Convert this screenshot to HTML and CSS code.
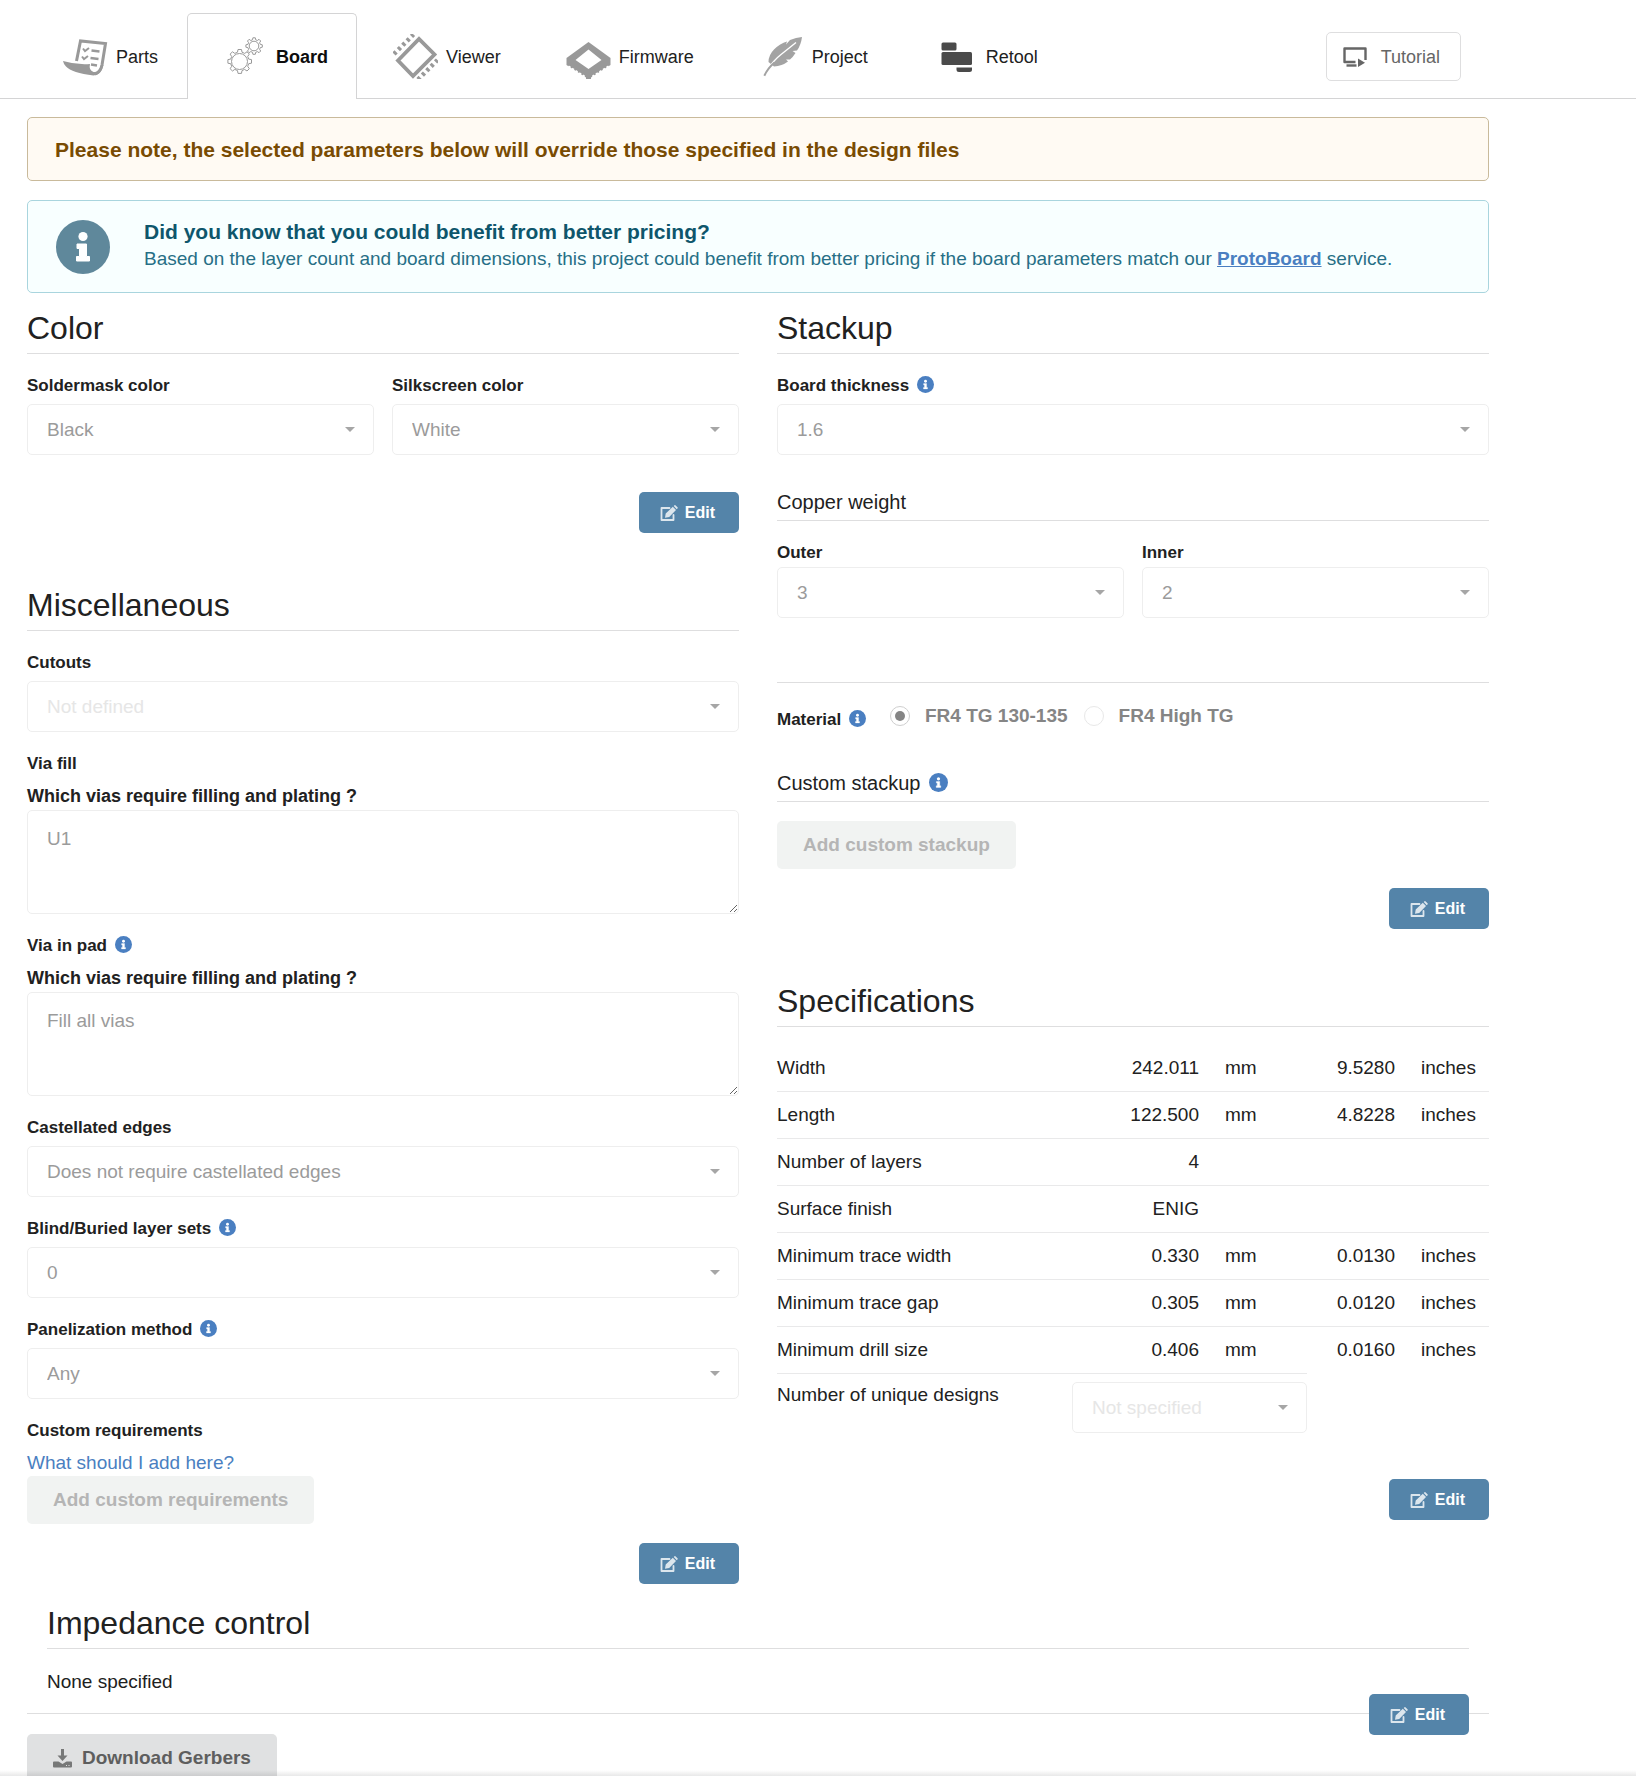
FILE: index.html
```html
<!DOCTYPE html>
<html lang="en">
<head>
    <meta charset="UTF-8">
    <meta name="viewport" content="width=device-width, initial-scale=1.0">
    <title>Board parameters</title>
    <link rel="stylesheet" href="styles.css">
</head>
<body>
    <!-- Shared icons -->
    <svg class="sprite" aria-hidden="true">
        <symbol id="icon-info" viewBox="0 0 54 54">
            <circle cx="27" cy="27" r="27" fill="currentColor"/>
            <circle cx="27" cy="16.500" r="4.600" fill="#fff"/>
            <path d="M21 24h9.500v12.500h3v4.500H20.500v-4.500h3v-8H21z" fill="#fff" stroke="#fff" stroke-width="1" stroke-linejoin="round"/>
        </symbol>
        <symbol id="icon-edit" viewBox="0 0 18 16">
            <path d="M9.500 3H1.500v12h12V10" fill="none" stroke="currentColor" stroke-width="1.800" stroke-linejoin="round" stroke-linecap="round"/>
            <path d="M12.800 1.800l3.200 3.200L9.200 11.900l-4.200.9.700-4.200zM13.700 1l.8-.8q.6-.4 1.200.2l1.800 1.800q.5.600 0 1.200l-.8.800z" fill="currentColor"/>
        </symbol>
    </svg>

    <header class="topbar">
        <nav class="tabs">
            <a class="tab" href="#parts">
                <svg class="tab-icon" viewBox="0 0 45 45">
                    <path d="M13.500 27L17.500 7 42.500 9.500 39 31Q37.500 38 32 40" fill="none" stroke="#999" stroke-width="3"/>
                    <path d="M0 27Q13 31 27 30Q25.500 36 30.500 38Q36 39 38 31L40.500 31Q38 41.500 30.500 41.500Q9 39 3 32.500Q.5 30 0 27z" fill="#999"/>
                    <path d="M20 14.500l2 2.500 4-3M19 22.500l2 2.500 4-3" fill="none" stroke="#999" stroke-width="2"/>
                    <path d="M28.500 16.500l8 1M27.500 24l8 1M28 30.500l6 1" stroke="#999" stroke-width="2.400"/>
                </svg>
                Parts
            </a>
            <a class="tab active" href="#board" aria-current="page">
                <svg class="tab-icon" viewBox="0 0 45 45">
                    <g fill="none" stroke="#999" stroke-width="1">
                        <circle cx="16.500" cy="27.500" r="8"/>
                        <path d="M14.500 18.200l.5-2.700h3.500l.5 2.700 2.700 1.200 2.300-1.600 2.300 2.300-1.600 2.400 1 2.600 2.800.5v3.600l-2.800.5-1 2.600 1.600 2.400-2.300 2.300-2.400-1.600-2.600 1.200-.5 2.800H15l-.5-2.800-2.700-1.200-2.300 1.600-2.400-2.300 1.600-2.400-1-2.600-2.800-.5v-3.600l2.800-.5 1-2.600-1.600-2.400 2.400-2.300 2.300 1.600z"/>
                        <circle cx="31" cy="12" r="4.800"/>
                        <path d="M29.500 5.800l.4-2h2.400l.4 2 1.700.7 1.600-1.200 1.700 1.700-1.100 1.700.7 1.700 2 .4v2.400l-2 .4-.7 1.700 1.100 1.700-1.700 1.700-1.600-1.100-1.700.7-.4 2h-2.400l-.4-2-1.700-.7-1.700 1.100-1.600-1.700 1.100-1.700-.7-1.700-2-.4v-2.400l2-.4.7-1.700L24.500 7l1.600-1.700 1.700 1.200z"/>
                    </g>
                </svg>
                Board
            </a>
            <a class="tab" href="#viewer">
                <svg class="tab-icon" viewBox="0 0 45 45">
                    <path d="M5 26.500L26 5 41.500 20.500 20 42z" fill="none" stroke="#999" stroke-width="3.800"/>
                    <path d="M1 20L20.500 .5M25 45.500L44.500 26" stroke="#999" stroke-width="4.500" stroke-dasharray="3 3.200"/>
                </svg>
                Viewer
            </a>
            <a class="tab" href="#firmware">
                <svg class="tab-icon" viewBox="0 0 45 45">
                    <path d="M22.500 8L44.500 24v7L25 43.500v1.500h-5v-1.500L.5 31v-7zM22.500 15.500L9.500 26 22.500 35l13-9z" fill="#999" fill-rule="evenodd"/>
                    <path d="M2 33L19.500 44M43 33L25.500 44" stroke="#fff" stroke-width="3.400" stroke-dasharray="2.400 1.800"/>
                </svg>
                Firmware
            </a>
            <a class="tab" href="#project">
                <svg class="tab-icon" viewBox="0 0 45 45">
                    <path d="M9.500 28Q9.500 21 15 15.500 21 9.500 28 7.500L27 10.500 31 6Q37 3.500 43 3 42 11 38 16.500l-4.500.500 3 2Q34 23 31 25.500l-4 0 2 2Q23 32 15 32.500z" fill="#a3a3a3"/>
                    <path d="M8.500 35.500Q15 26 22 20.500T37 8.500" fill="none" stroke="#fff" stroke-width="1.400"/>
                    <path d="M5.300 41.700Q9 34 15.500 28.500" fill="none" stroke="#a3a3a3" stroke-width="2"/>
                </svg>
                Project
            </a>
            <a class="tab" href="#retool">
                <svg class="tab-icon" viewBox="0 0 45 45">
                    <g fill="#4a4a4a">
                        <rect x="8.500" y="8.500" width="15" height="8" rx="1.500"/>
                        <rect x="8.500" y="18" width="30.500" height="13" rx="1.500"/>
                        <path d="M23.500 33.500H39v2q0 2.500-2.500 2.500H26q-2.500 0-2.500-2.500z"/>
                    </g>
                </svg>
                Retool
            </a>
        </nav>
        <button class="tutorial" type="button">
            <svg class="tutorial-icon" viewBox="0 0 24 20">
                <path d="M12.500 15H1.500V1.500h21V13" fill="none" stroke="#666" stroke-width="2.400" stroke-linejoin="round"/>
                <path d="M3.500 18.500h10" stroke="#666" stroke-width="2.400"/>
                <path d="M15 11.500l7 4.250-7 4.250z" fill="#666"/>
            </svg>
            Tutorial
        </button>
    </header>

    <main class="content">
        <div class="message warning">Please note, the selected parameters below will override those specified in the design files</div>

        <div class="message info">
            <svg class="message-icon"><use href="#icon-info"/></svg>
            <div>
                <div class="message-title">Did you know that you could benefit from better pricing?</div>
                <p>Based on the layer count and board dimensions, this project could benefit from better pricing if the board parameters match our <a href="#protoboard">ProtoBoard</a> service.</p>
            </div>
        </div>

        <div class="columns">
            <div class="column">
                <section>
                    <h2>Color</h2>
                    <div class="fields">
                        <div class="field">
                            <label for="soldermask">Soldermask color</label>
                            <div class="dropdown"><select id="soldermask" disabled><option>Black</option></select></div>
                        </div>
                        <div class="field">
                            <label for="silkscreen">Silkscreen color</label>
                            <div class="dropdown"><select id="silkscreen" disabled><option>White</option></select></div>
                        </div>
                    </div>
                    <div class="actions spaced">
                        <button class="edit" type="button"><svg><use href="#icon-edit"/></svg>Edit</button>
                    </div>
                </section>

                <section>
                    <h2>Miscellaneous</h2>
                    <div class="field">
                        <label for="cutouts">Cutouts</label>
                        <div class="dropdown empty"><select id="cutouts" disabled><option>Not defined</option></select></div>
                    </div>
                    <div class="field">
                        <div class="label">Via fill</div>
                        <label class="question" for="via-fill">Which vias require filling and plating ?</label>
                        <textarea id="via-fill" disabled>U1</textarea>
                    </div>
                    <div class="field">
                        <div class="label">Via in pad <svg class="hint"><use href="#icon-info"/></svg></div>
                        <label class="question" for="via-in-pad">Which vias require filling and plating ?</label>
                        <textarea id="via-in-pad" disabled>Fill all vias</textarea>
                    </div>
                    <div class="field">
                        <label for="castellated">Castellated edges</label>
                        <div class="dropdown"><select id="castellated" disabled><option>Does not require castellated edges</option></select></div>
                    </div>
                    <div class="field">
                        <label for="blind">Blind/Buried layer sets <svg class="hint"><use href="#icon-info"/></svg></label>
                        <div class="dropdown"><select id="blind" disabled><option>0</option></select></div>
                    </div>
                    <div class="field">
                        <label for="panelization">Panelization method <svg class="hint"><use href="#icon-info"/></svg></label>
                        <div class="dropdown"><select id="panelization" disabled><option>Any</option></select></div>
                    </div>
                    <div class="field">
                        <div class="label">Custom requirements</div>
                        <a class="help-link" href="#help">What should I add here?</a>
                        <button class="add" type="button" disabled>Add custom requirements</button>
                    </div>
                    <div class="actions">
                        <button class="edit" type="button"><svg><use href="#icon-edit"/></svg>Edit</button>
                    </div>
                </section>
            </div>

            <div class="column">
                <section>
                    <h2>Stackup</h2>
                    <div class="field">
                        <label for="thickness">Board thickness <svg class="hint"><use href="#icon-info"/></svg></label>
                        <div class="dropdown"><select id="thickness" disabled><option>1.6</option></select></div>
                    </div>
                    <h3>Copper weight</h3>
                    <div class="fields tight">
                        <div class="field">
                            <label for="outer">Outer</label>
                            <div class="dropdown"><select id="outer" disabled><option>3</option></select></div>
                        </div>
                        <div class="field">
                            <label for="inner">Inner</label>
                            <div class="dropdown"><select id="inner" disabled><option>2</option></select></div>
                        </div>
                    </div>
                    <div class="material" role="radiogroup" aria-labelledby="material-label">
                        <div class="label" id="material-label">Material <svg class="hint"><use href="#icon-info"/></svg></div>
                        <label class="radio"><input type="radio" name="material" checked disabled>FR4 TG 130-135</label>
                        <label class="radio"><input type="radio" name="material" disabled>FR4 High TG</label>
                    </div>
                    <h3>Custom stackup <svg class="hint"><use href="#icon-info"/></svg></h3>
                    <button class="add stackup" type="button" disabled>Add custom stackup</button>
                    <div class="actions">
                        <button class="edit" type="button"><svg><use href="#icon-edit"/></svg>Edit</button>
                    </div>
                </section>

                <section>
                    <h2>Specifications</h2>
                    <table class="specs">
                        <colgroup>
                            <col><col class="col-value"><col class="col-unit"><col class="col-inch"><col class="col-inches">
                        </colgroup>
                        <tbody>
                            <tr><td>Width</td><td>242.011</td><td>mm</td><td>9.5280</td><td>inches</td></tr>
                            <tr><td>Length</td><td>122.500</td><td>mm</td><td>4.8228</td><td>inches</td></tr>
                            <tr><td>Number of layers</td><td>4</td><td></td><td></td><td></td></tr>
                            <tr><td>Surface finish</td><td>ENIG</td><td></td><td></td><td></td></tr>
                            <tr><td>Minimum trace width</td><td>0.330</td><td>mm</td><td>0.0130</td><td>inches</td></tr>
                            <tr><td>Minimum trace gap</td><td>0.305</td><td>mm</td><td>0.0120</td><td>inches</td></tr>
                            <tr><td>Minimum drill size</td><td>0.406</td><td>mm</td><td>0.0160</td><td>inches</td></tr>
                            <tr class="designs">
                                <td><label for="designs">Number of unique designs</label></td>
                                <td colspan="2"><div class="dropdown empty"><select id="designs" disabled><option>Not specified</option></select></div></td>
                            </tr>
                        </tbody>
                    </table>
                    <div class="actions spaced-lg">
                        <button class="edit" type="button"><svg><use href="#icon-edit"/></svg>Edit</button>
                    </div>
                </section>
            </div>
        </div>

        <section class="impedance">
            <h2>Impedance control</h2>
            <p>None specified</p>
            <div class="actions">
                <button class="edit" type="button"><svg><use href="#icon-edit"/></svg>Edit</button>
            </div>
        </section>

        <div class="downloads">
            <button class="download" type="button">
                <svg viewBox="0 0 19 19">
                    <path d="M8 0h3v6.500h3.500l-5 5.500-5-5.500H8z" fill="currentColor"/>
                    <path d="M1 12.500h4.500L9.500 15l4-2.500H18q1 0 1 1v4q0 1-1 1H1q-1 0-1-1v-4q0-1 1-1z" fill="currentColor"/>
                    <path d="M13 16.500h1M15.500 16.500h1" stroke="#e0e1e2"/>
                </svg>
                Download Gerbers
            </button>
        </div>
    </main>

    <div class="bottom-shade"></div>
</body>
</html>
```

FILE: styles.css
```css
* {
    box-sizing: border-box;
}
body {
    margin: 0;
    height: 100vh;
    overflow: hidden;
    font-family: "Helvetica Neue", "Liberation Sans", Arial, sans-serif;
    font-size: 19px;
    line-height: 24px;
    color: #212121;
    background: #fff;
}
button, select, textarea {
    font-family: inherit;
    font-size: inherit;
    line-height: inherit;
}
h2, h3, p {
    margin: 0;
    font-weight: normal;
}
.sprite {
    display: none;
}

/* Top bar */
.topbar {
    display: flex;
    align-items: flex-end;
    padding: 13px 175px 0 27px;
    border-bottom: 1px solid #d4d4d5;
}
.tabs {
    display: flex;
    flex: 1;
}
.tab {
    display: flex;
    align-items: center;
    gap: 8px;
    height: 86px;
    margin-bottom: -1px;
    padding: 0 28px 0 35px;
    border: 1px solid transparent;
    border-bottom: none;
    font-size: 18px;
    color: #212121;
    text-decoration: none;
}
.tab.active {
    background: #fff;
    border-color: #d4d4d5;
    border-radius: 5px 5px 0 0;
    font-weight: bold;
    color: #0d0d0d;
}
.tab-icon {
    width: 45px;
    height: 45px;
}
.tutorial {
    display: flex;
    align-items: center;
    gap: 14px;
    height: 49px;
    margin-bottom: 17px;
    padding: 0 20px 0 16px;
    background: #fff;
    border: 1px solid #dededf;
    border-radius: 5px;
    font-size: 18px;
    color: #666;
}
.tutorial-icon {
    width: 24px;
    height: 20px;
}

/* Messages */
.content {
    padding: 18px 147px 0 27px;
}
.message {
    border: 1px solid;
    border-radius: 5px;
}
.warning {
    padding: 20px 27px 18px;
    background: #fffaf3;
    border-color: #c9ba9b;
    font-size: 21px;
    font-weight: bold;
    color: #794b02;
}
.info {
    display: flex;
    gap: 34px;
    margin-top: 19px;
    padding: 18px 28px 17px;
    background: #f8ffff;
    border-color: #a9d5de;
    color: #276f86;
}
.message-icon {
    flex: none;
    width: 54px;
    height: 54px;
    margin: 1px 0;
    color: #5f889b;
}
.message-title {
    font-size: 21px;
    line-height: 26px;
    font-weight: bold;
    color: #0e566c;
}
.info p {
    line-height: 28px;
}
.info a {
    font-weight: bold;
    color: #4a7fc1;
}

/* Sections */
.columns {
    display: grid;
    grid-template-columns: 1fr 1fr;
    gap: 38px;
    margin-top: 15px;
}
section + section {
    margin-top: 52px;
}
h2 {
    padding-bottom: 5px;
    border-bottom: 1px solid #dededf;
    font-size: 32px;
    line-height: 40px;
}
h3 {
    margin-top: 34px;
    padding-bottom: 5px;
    border-bottom: 1px solid #dededf;
    font-size: 20px;
    line-height: 26px;
}
.fields {
    display: grid;
    grid-template-columns: 1fr 1fr;
    gap: 18px;
}
.field {
    margin-top: 20px;
}
.field > label, .label {
    display: block;
    margin-bottom: 6px;
    font-size: 17px;
    font-weight: bold;
}
.tight .field > label {
    margin-bottom: 2px;
}
.field > .question {
    margin-bottom: 0;
    font-size: 18px;
    line-height: 28px;
}
.hint {
    width: 17px;
    height: 17px;
    margin-left: 3px;
    vertical-align: -2px;
    color: #4a7fc1;
}
h3 .hint {
    width: 19px;
    height: 19px;
}

/* Controls */
.dropdown {
    display: grid;
    align-items: center;
}
.dropdown select {
    grid-area: 1 / 1;
    width: 100%;
    height: 51px;
    padding: 0 38px 0 19px;
    appearance: none;
    background: #fff;
    border: 1px solid #eee;
    border-radius: 5px;
    color: #9b9b9b;
    opacity: 1;
}
.dropdown::after {
    content: "";
    grid-area: 1 / 1;
    justify-self: end;
    margin-right: 19px;
    border: 5px solid transparent;
    border-top-color: #a6a6a6;
    border-bottom: none;
}
.dropdown.empty select {
    color: #e6e6e6;
}
textarea {
    display: block;
    width: 100%;
    height: 104px;
    padding: 16px 19px;
    background: #fff;
    border: 1px solid #eee;
    border-radius: 5px;
    color: #9b9b9b;
    resize: vertical;
}
.help-link {
    display: block;
    line-height: 27px;
    color: #4a7fc1;
    text-decoration: none;
}
.add, .download {
    height: 48px;
    padding: 0 26px;
    background: #f1f3f2;
    border: none;
    border-radius: 5px;
    font-weight: bold;
    color: #b5b5b5;
}
.stackup {
    margin-top: 19px;
}
.actions {
    display: flex;
    justify-content: flex-end;
    margin-top: 19px;
}
.spaced {
    margin-top: 37px;
}
.spaced-lg {
    margin-top: 46px;
}
.edit {
    display: flex;
    align-items: center;
    gap: 7px;
    height: 41px;
    padding: 0 24px 0 21px;
    background: #5484a9;
    border: none;
    border-radius: 5px;
    font-size: 16px;
    font-weight: bold;
    color: #fff;
}
.edit svg {
    width: 18px;
    height: 16px;
    opacity: 0.8;
}

/* Material */
.material {
    display: flex;
    align-items: flex-start;
    gap: 16px;
    margin-top: 64px;
    padding: 20px 0 4px;
    border-top: 1px solid #dededf;
}
.material .label {
    margin: 5px 8px 0 0;
}
.radio {
    display: flex;
    align-items: center;
    gap: 15px;
    line-height: 26px;
    font-weight: bold;
    color: #858585;
}
.radio input {
    display: grid;
    place-items: center;
    width: 20px;
    height: 20px;
    margin: 0;
    appearance: none;
    border: 1px solid #e8e8e8;
    border-radius: 50%;
}
.radio input:checked {
    border-color: #cfcfcf;
}
.radio input:checked::after {
    content: "";
    width: 10px;
    height: 10px;
    border-radius: 50%;
    background: #858585;
}

/* Specifications */
.specs {
    width: 100%;
    margin-top: 18px;
    border-collapse: separate;
    border-spacing: 0;
    table-layout: fixed;
}
.col-value {
    width: 140px;
}
.col-unit {
    width: 95px;
}
.col-inch {
    width: 101px;
}
.col-inches {
    width: 81px;
}
.specs td {
    padding: 11px 13px;
    border-top: 1px solid #e9e9ea;
    vertical-align: top;
}
.specs tr:first-child td {
    border-top: none;
}
.specs td:first-child {
    padding-left: 0;
}
.specs td:nth-child(2), .specs td:nth-child(4) {
    text-align: right;
}
.specs td:last-child {
    padding-right: 0;
}
.specs .designs td {
    padding-top: 9px;
}
.specs .designs td:last-child {
    padding: 8px 0 0;
}

/* Footer */
.impedance {
    margin: 19px 20px 0;
}
.impedance p {
    margin-top: 21px;
}
.impedance .actions {
    position: relative;
    margin: 0 0 -22px;
}
.downloads {
    padding-top: 20px;
    border-top: 1px solid #dededf;
}
.download {
    display: flex;
    align-items: center;
    gap: 10px;
    background: #e0e1e2;
    color: #5e5e5e;
}
.download svg {
    width: 19px;
    height: 19px;
    opacity: 0.8;
}
.bottom-shade {
    position: fixed;
    left: 0;
    right: 0;
    bottom: 0;
    height: 6px;
    background: linear-gradient(rgba(34, 36, 38, 0), rgba(34, 36, 38, 0.1));
}
```
